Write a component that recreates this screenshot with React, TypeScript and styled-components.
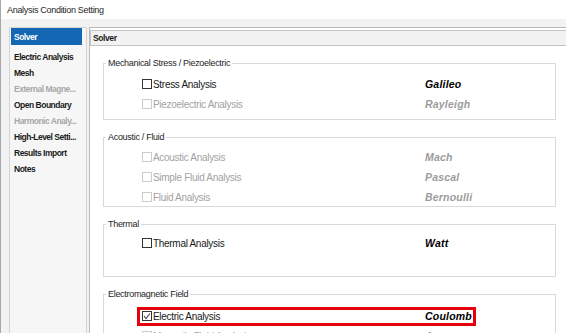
import React from "react";
import styled, { createGlobalStyle } from "styled-components";

const GlobalStyle = createGlobalStyle`
  html, body {
    margin: 0;
    padding: 0;
    background: #ffffff;
  }
  body {
    font-family: "Liberation Sans", Arial, sans-serif;
  }
`;

type Item = {
  label: string;
  name: string;
  checked?: boolean;
  disabled?: boolean;
  highlight?: boolean;
};

type Group = {
  title: string;
  height?: number;
  pt: number;
  items: Item[];
};

const navItems = [
  { label: "Solver", active: true },
  { label: "Electric Analysis" },
  { label: "Mesh" },
  { label: "External Magne...", disabled: true },
  { label: "Open Boundary" },
  { label: "Harmonic Analy...", disabled: true },
  { label: "High-Level Setti..." },
  { label: "Results Import" },
  { label: "Notes" },
];

const groups: Group[] = [
  {
    title: "Mechanical Stress / Piezoelectric",
    height: 57,
    pt: 10,
    items: [
      { label: "Stress Analysis", name: "Galileo" },
      { label: "Piezoelectric Analysis", name: "Rayleigh", disabled: true },
    ],
  },
  {
    title: "Acoustic / Fluid",
    height: 70,
    pt: 9,
    items: [
      { label: "Acoustic Analysis", name: "Mach", disabled: true },
      { label: "Simple Fluid Analysis", name: "Pascal", disabled: true },
      { label: "Fluid Analysis", name: "Bernoulli", disabled: true },
    ],
  },
  {
    title: "Thermal",
    height: 53,
    pt: 8,
    items: [{ label: "Thermal Analysis", name: "Watt" }],
  },
  {
    title: "Electromagnetic Field",
    pt: 11,
    items: [
      { label: "Electric Analysis", name: "Coulomb", checked: true, highlight: true },
      { label: "Magnetic Field Analysis", name: "Ampere", disabled: true },
    ],
  },
];

const AnalysisConditionSetting = () => {
  return (
    <Window>
      <TitleBar>Analysis Condition Setting</TitleBar>
      <Body>
        <Nav>
          {navItems.map((n) => (
            <NavItem key={n.label} $active={n.active} $disabled={n.disabled}>
              {n.label}
            </NavItem>
          ))}
        </Nav>
        <Panel>
          <Header>Solver</Header>
          <Scroll>
            {groups.map((g) => (
              <GroupBox key={g.title} $h={g.height} $pt={g.pt}>
                <Legend>{g.title}</Legend>
                {g.items.map((it) => (
                  <Row key={it.label}>
                    <Option $highlight={it.highlight}>
                      <Label $disabled={it.disabled}>
                        <Check $disabled={it.disabled}>
                          {it.checked && (
                            <svg width="8" height="8" viewBox="0 0 8 8">
                              <polyline
                                points="1,4 3,6.5 7,1.5"
                                fill="none"
                                stroke="#4a4a4a"
                                strokeWidth="1.2"
                              />
                            </svg>
                          )}
                        </Check>
                        {it.label}
                      </Label>
                      <Name $disabled={it.disabled}>{it.name}</Name>
                    </Option>
                  </Row>
                ))}
              </GroupBox>
            ))}
          </Scroll>
        </Panel>
      </Body>
    </Window>
  );
};

const Window = styled.div`
  width: 566px;
  height: 333px;
  overflow: hidden;
  box-sizing: border-box;
  border-left: 1px solid #a8a8a8;
  background: #f2f2f2;
  display: flex;
  flex-direction: column;
`;

const TitleBar = styled.div`
  height: 19px;
  flex: none;
  background: #ffffff;
  padding-left: 6px;
  display: flex;
  align-items: center;
  font-size: 9px;
  letter-spacing: -0.3px;
  color: #1e1e1e;
`;

const Body = styled.div`
  flex: 1;
  min-height: 0;
  display: flex;
  gap: 2px;
  padding: 8px 0 0 8px;
`;

const Nav = styled.div`
  width: 78px;
  flex: none;
  box-sizing: border-box;
  border: 1px solid #d4d4d4;
  border-bottom: none;
  background: #f6f6f6;
  padding: 0 4px 0 1px;
`;

const NavItem = styled.div<{ $active?: boolean; $disabled?: boolean }>`
  height: ${(p) => (p.$active ? "17px" : "16px")};
  margin-bottom: ${(p) => (p.$active ? "4px" : "0")};
  display: flex;
  align-items: center;
  padding-left: 3px;
  font-size: 8.5px;
  font-weight: bold;
  letter-spacing: -0.5px;
  white-space: nowrap;
  overflow: hidden;
  background: ${(p) => (p.$active ? "#1467b3" : "transparent")};
  color: ${(p) => (p.$active ? "#ffffff" : p.$disabled ? "#a8a8a8" : "#1a1a1a")};
`;

const Panel = styled.div`
  flex: 1;
  min-width: 0;
  box-sizing: border-box;
  border: 1px solid #b9b9b9;
  border-right: none;
  border-bottom: none;
  background: #ffffff;
  display: flex;
  flex-direction: column;
`;

const Header = styled.div`
  margin-top: 2px;
  height: 16px;
  flex: none;
  box-sizing: border-box;
  border: 1px solid #c4c4c4;
  border-right: none;
  background: #f2f2f2;
  padding-left: 2px;
  display: flex;
  align-items: center;
  font-size: 8.5px;
  font-weight: bold;
  letter-spacing: -0.4px;
  color: #1a1a1a;
`;

const Scroll = styled.div`
  display: flex;
  flex-direction: column;
  gap: 17px;
  padding: 17px 10px 0 13px;
`;

const GroupBox = styled.div<{ $h?: number; $pt: number }>`
  position: relative;
  flex: none;
  box-sizing: border-box;
  border: 1px solid #d9d9d9;
  padding-top: ${(p) => p.$pt}px;
  height: ${(p) => (p.$h ? `${p.$h}px` : "auto")};
`;

const Legend = styled.span`
  position: absolute;
  top: -7px;
  left: 2px;
  padding: 0 2px;
  background: #ffffff;
  line-height: 12px;
  font-size: 9px;
  letter-spacing: -0.3px;
  color: #1e1e1e;
  white-space: nowrap;
`;

const Row = styled.div`
  height: 20px;
  display: flex;
  align-items: center;
  padding-left: 36px;
`;

const Option = styled.div<{ $highlight?: boolean }>`
  width: 333px;
  height: 13px;
  box-sizing: border-box;
  padding-left: 2px;
  display: grid;
  grid-template-columns: 283px auto;
  align-items: center;
  outline: ${(p) => (p.$highlight ? "3px solid #e6000a" : "none")};
`;

const Label = styled.div<{ $disabled?: boolean }>`
  display: flex;
  align-items: center;
  font-size: 10px;
  letter-spacing: -0.3px;
  white-space: nowrap;
  color: ${(p) => (p.$disabled ? "#a2a2a2" : "#1a1a1a")};
`;

const Check = styled.span<{ $disabled?: boolean }>`
  width: 10px;
  height: 10px;
  margin-right: 1px;
  box-sizing: border-box;
  border: 1px solid ${(p) => (p.$disabled ? "#cccccc" : "#333333")};
  background: #ffffff;
  display: flex;
  align-items: center;
  justify-content: center;
`;

const Name = styled.div<{ $disabled?: boolean }>`
  font-size: 10.5px;
  font-weight: bold;
  font-style: italic;
  letter-spacing: 0.2px;
  white-space: nowrap;
  color: ${(p) => (p.$disabled ? "#9c9c9c" : "#000000")};
`;

export default function App() {
  return (
    <>
      <GlobalStyle />
      <AnalysisConditionSetting />
    </>
  );
}
